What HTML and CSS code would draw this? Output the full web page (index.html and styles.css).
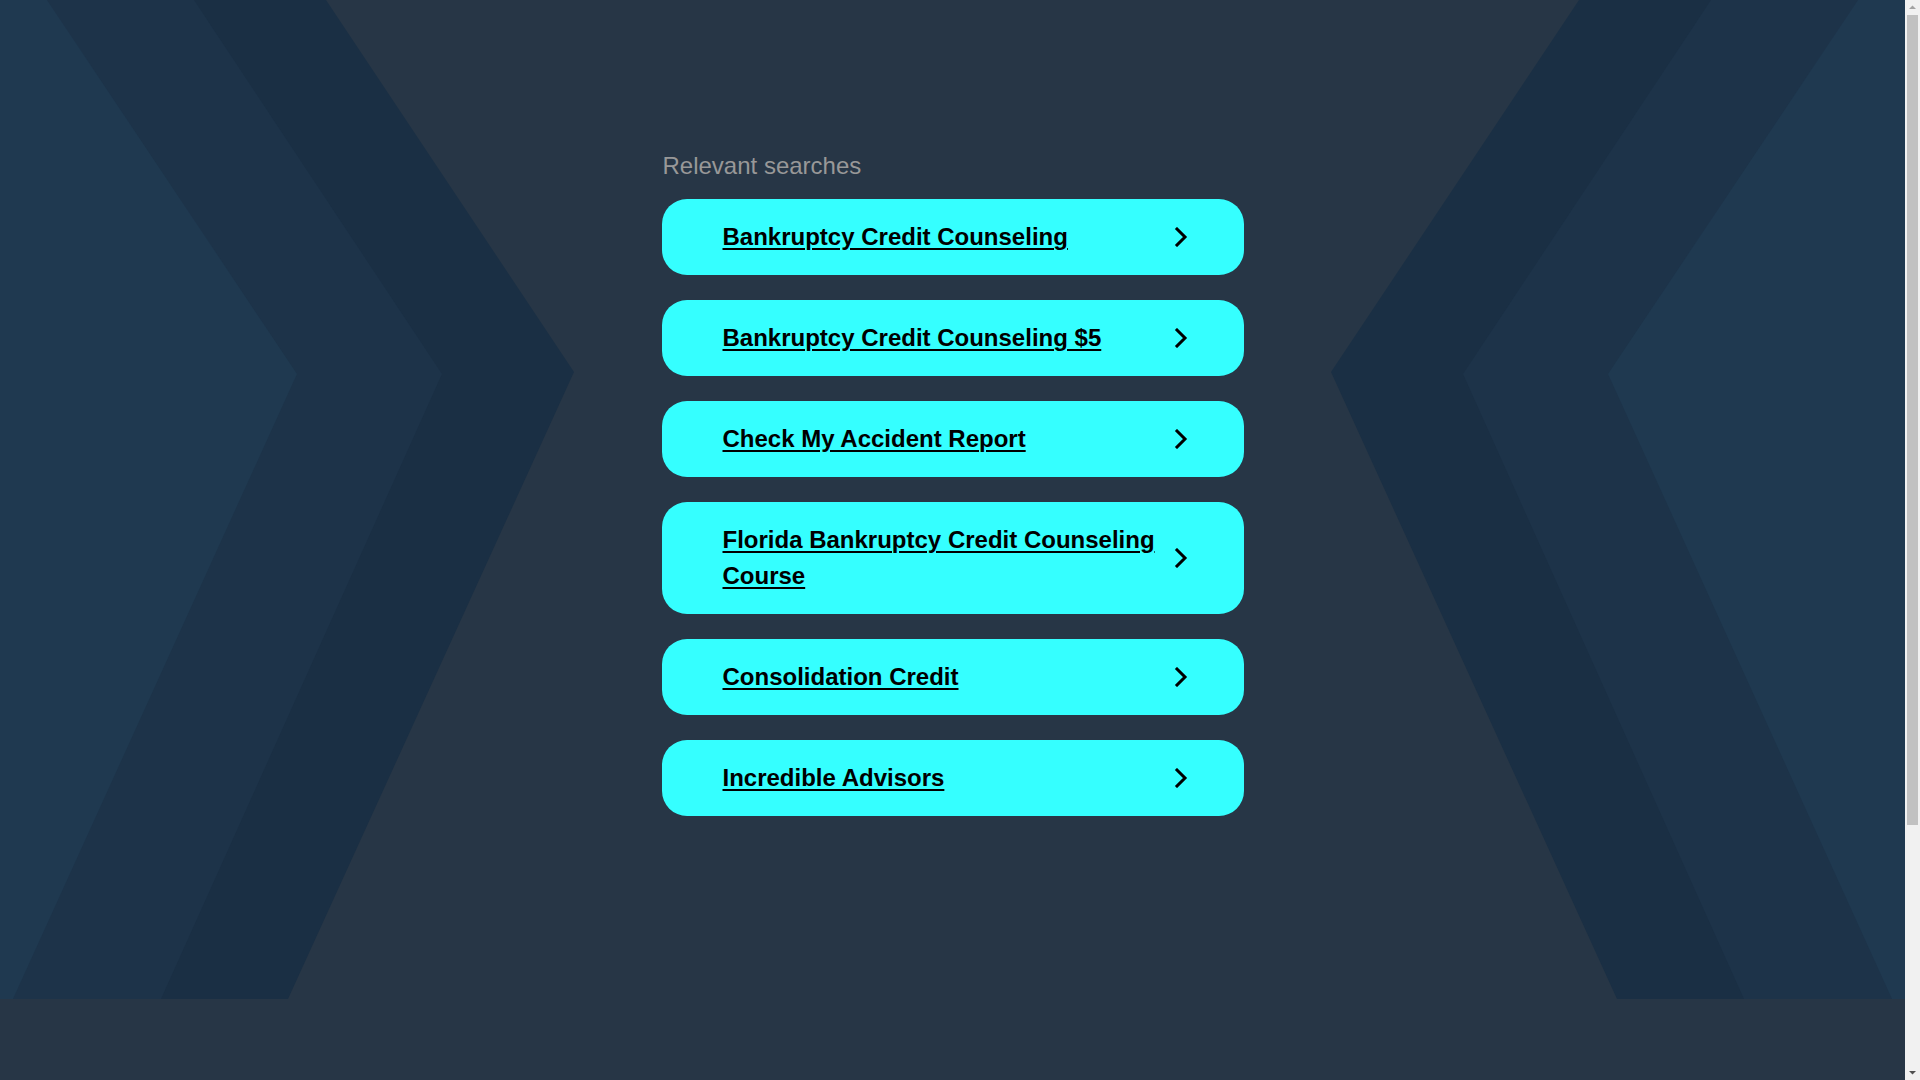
FILE: index.html
```html
<!DOCTYPE html>
<html lang="en">
<head>
<meta charset="utf-8">
<title>Relevant searches</title>
<link rel="stylesheet" href="styles.css">
</head>
<body>
<div class="page">
  <div class="hero">
    <svg class="bg" viewBox="0 0 1905 999" preserveAspectRatio="none" aria-hidden="true">
      <polygon fill="#1a2f44" points="0,0 326,0 574,372 288,999 0,999"/>
      <polygon fill="#1d3349" points="0,0 194,0 442,374 161,999 0,999"/>
      <polygon fill="#1f3950" points="0,0 47,0 297,374 13,999 0,999"/>
      <polygon fill="#1a2f44" points="1905,0 1579,0 1331,372 1617,999 1905,999"/>
      <polygon fill="#1d3349" points="1905,0 1711,0 1463,374 1744,999 1905,999"/>
      <polygon fill="#1f3950" points="1905,0 1858,0 1608,374 1892,999 1905,999"/>
    </svg>
    <main class="panel">
      <h2 class="title">Relevant searches</h2>
      <ul class="list">
        <li><a class="item" href="#"><span class="label">Bankruptcy Credit Counseling</span><svg class="chev" viewBox="0 0 14 20"><path d="M3 2 L11 10 L3 18" /></svg></a></li>
        <li><a class="item" href="#"><span class="label">Bankruptcy Credit Counseling $5</span><svg class="chev" viewBox="0 0 14 20"><path d="M3 2 L11 10 L3 18" /></svg></a></li>
        <li><a class="item" href="#"><span class="label">Check My Accident Report</span><svg class="chev" viewBox="0 0 14 20"><path d="M3 2 L11 10 L3 18" /></svg></a></li>
        <li><a class="item" href="#"><span class="label">Florida Bankruptcy Credit Counseling Course</span><svg class="chev" viewBox="0 0 14 20"><path d="M3 2 L11 10 L3 18" /></svg></a></li>
        <li><a class="item" href="#"><span class="label">Consolidation Credit</span><svg class="chev" viewBox="0 0 14 20"><path d="M3 2 L11 10 L3 18" /></svg></a></li>
        <li><a class="item" href="#"><span class="label">Incredible Advisors</span><svg class="chev" viewBox="0 0 14 20"><path d="M3 2 L11 10 L3 18" /></svg></a></li>
      </ul>
    </main>
  </div>
  <footer class="foot"></footer>
</div>
<div class="scrollbar" aria-hidden="true">
  <svg class="arrow" viewBox="0 0 15 15"><polygon points="4,9 7.5,5.5 11,9" fill="#a3a3a3"/></svg>
  <div class="track"><div class="thumb"></div></div>
  <svg class="arrow" viewBox="0 0 15 15"><polygon points="4,6 11,6 7.5,9.5" fill="#505050"/></svg>
</div>
</body>
</html>
```
FILE: styles.css
```css
html, body {
  margin: 0;
  padding: 0;
}
html {
  overflow: hidden;
}
body {
  display: flex;
  height: 1080px;
  background: #273646;
  font-family: "Liberation Sans", Arial, sans-serif;
}
.page {
  flex: 1;
  min-width: 0;
}
.hero {
  position: relative;
  height: 999px;
  overflow: hidden;
}
.bg {
  position: absolute;
  inset: 0;
  width: 100%;
  height: 100%;
  z-index: 0;
}
.panel {
  position: relative;
  z-index: 1;
  width: 582px;
  margin: 0 auto;
  padding-top: 148px;
}
.title {
  margin: 0 0 15px 1px;
  font-size: 24px;
  line-height: 36px;
  font-weight: normal;
  color: #989898;
}
.list {
  list-style: none;
  margin: 0;
  padding: 0;
  display: flex;
  flex-direction: column;
  gap: 25px;
}
.item {
  display: flex;
  align-items: center;
  background: #35ffff;
  border-radius: 25px;
  padding: 20px 56px 20px 61px;
  color: #000;
  text-decoration: none;
}
.label {
  flex: 1;
  font-size: 24px;
  line-height: 36px;
  font-weight: bold;
  text-decoration: underline;
  text-decoration-thickness: 2px;
  text-underline-offset: 3px;
  padding-right: 16px;
}
.chev {
  width: 14px;
  height: 20px;
  flex: none;
}
.chev path {
  fill: none;
  stroke: #000;
  stroke-width: 3;
  stroke-linecap: square;
}
.foot {
  height: 81px;
}
.scrollbar {
  width: 15px;
  flex: none;
  height: 1080px;
  background: #f1f1f1;
  display: flex;
  flex-direction: column;
}
.arrow {
  width: 15px;
  height: 15px;
  flex: none;
  display: block;
}
.track {
  flex: 1;
  padding: 0 2px;
}
.thumb {
  height: 810px;
  background: #c1c1c1;
}
```
